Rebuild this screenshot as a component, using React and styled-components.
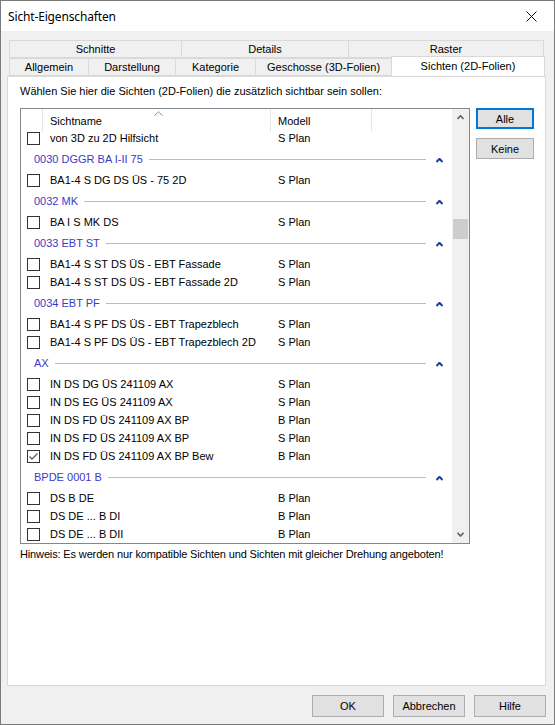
import React from "react";
import styled, { createGlobalStyle } from "styled-components";

const GlobalStyle = createGlobalStyle`
  html, body {
    margin: 0;
    padding: 0;
    background: #ffffff;
  }
  * {
    box-sizing: border-box;
  }
`;

const Window = styled.div`
  width: 555px;
  height: 725px;
  border: 1px solid #7a7a7a;
  background: #f0f0f0;
  display: flex;
  flex-direction: column;
  font-family: "Liberation Sans", Arial, sans-serif;
  font-size: 11px;
  color: #000;
`;

const TitleBar = styled.div`
  height: 30px;
  background: #fff;
  display: flex;
  align-items: center;
  justify-content: space-between;
  padding-left: 7px;
  font-family: "Noto Sans", "Open Sans", sans-serif;
  font-size: 12px;
  letter-spacing: -0.15px;
`;

const CloseBox = styled.div`
  width: 46px;
  height: 30px;
  display: flex;
  align-items: center;
  justify-content: center;
`;

const Content = styled.div`
  padding: 9px 8px 0 6px;
  display: flex;
  flex-direction: column;
`;

const TabStrip = styled.div`
  margin-left: 2px;
  display: flex;
  flex-direction: column;
`;

const TabRow = styled.div`
  display: flex;
  height: 18px;
`;

const Tab = styled.div`
  width: ${(p) => p.$w}px;
  height: ${(p) => (p.$active ? 20 : 18)}px;
  margin-top: ${(p) => (p.$active ? -2 : 0)}px;
  border: 1px solid #d9d9d9;
  border-right: ${(p) => (p.$last ? "1px solid #d9d9d9" : "none")};
  border-bottom: ${(p) => (p.$active ? "none" : "1px solid #d9d9d9")};
  background: ${(p) => (p.$active ? "#fff" : "#f0f0f0")};
  display: flex;
  align-items: center;
  justify-content: center;
  padding-bottom: ${(p) => (p.$active ? 2 : 0)}px;
  position: relative;
  z-index: ${(p) => (p.$active ? 2 : 1)};
  margin-bottom: ${(p) => (p.$active ? -1 : 0)}px;
  white-space: nowrap;
`;

const Panel = styled.div`
  height: 610px;
  border: 1px solid #d9d9d9;
  background: #fff;
  padding: 8px 0 0 12px;
  display: flex;
  flex-direction: column;
`;

const Label = styled.div`
  height: 13px;
  line-height: 13px;
  margin-bottom: 10px;
  white-space: nowrap;
`;

const ListArea = styled.div`
  display: flex;
  gap: 6px;
  align-items: flex-start;
`;

const ListBox = styled.div`
  width: 450px;
  height: 436px;
  border: 1px solid #828790;
  background: #fff;
  display: flex;
`;

const ListMain = styled.div`
  flex: 1;
  display: flex;
  flex-direction: column;
  overflow: hidden;
`;

const Header = styled.div`
  height: 23px;
  display: flex;
  flex-shrink: 0;
`;

const HeadCell = styled.div`
  width: ${(p) => (p.$w ? `${p.$w}px` : "auto")};
  flex: ${(p) => (p.$w ? "none" : 1)};
  border-right: ${(p) => (p.$w ? "1px solid #e5e5e5" : "none")};
  padding-left: 7px;
  padding-top: 1px;
  display: flex;
  align-items: center;
  position: relative;
`;

const SortMark = styled.svg`
  position: absolute;
  top: 2px;
  left: 50%;
  margin-left: -3px;
`;

const Body = styled.div`
  flex: 1;
  overflow: hidden;
`;

/* list is scrolled a few pixels into its first entry */
const Scroller = styled.div`
  margin-top: -3px;
`;

const Row = styled.div`
  height: 18px;
  display: flex;
  align-items: center;
`;

const CheckCell = styled.div`
  width: 22px;
  padding-left: 6px;
  display: flex;
  align-items: center;
`;

const Box = styled.div`
  width: 13px;
  height: 13px;
  border: 1px solid #333;
  background: #fff;
  display: flex;
  align-items: center;
  justify-content: center;
`;

const NameCell = styled.div`
  width: 228px;
  padding-left: 7px;
  white-space: nowrap;
`;

const ModelCell = styled.div`
  padding-left: 7px;
  white-space: nowrap;
`;

const Group = styled.div`
  height: 24px;
  display: flex;
  align-items: center;
  padding-left: 13px;
  color: #3a3ac8;
`;

const GroupRule = styled.div`
  flex: 1;
  height: 1px;
  margin-left: 6px;
  margin-top: 1px;
  background: #b0bcd8;
`;

const Collapse = styled.div`
  width: 26px;
  display: flex;
  justify-content: center;
  padding-top: 3px;
`;

const ScrollBar = styled.div`
  width: 17px;
  background: #f0f0f0;
  display: flex;
  flex-direction: column;
`;

const ArrowBox = styled.div`
  height: 17px;
  display: flex;
  align-items: center;
  justify-content: center;
`;

const Track = styled.div`
  flex: 1;
`;

const Thumb = styled.div`
  width: 15px;
  height: 20px;
  margin-left: 1px;
  background: #cdcdcd;
`;

const SideButtons = styled.div`
  display: flex;
  flex-direction: column;
  gap: 9px;
`;

const Button = styled.div`
  width: ${(p) => p.$w}px;
  height: ${(p) => p.$h}px;
  background: #e1e1e1;
  border: ${(p) => (p.$default ? "2px solid #0078d7" : "1px solid #adadad")};
  display: flex;
  align-items: center;
  justify-content: center;
`;

const Hint = styled.div`
  margin-top: 4px;
  height: 13px;
  line-height: 13px;
  white-space: nowrap;
  letter-spacing: -0.14px;
`;

const Footer = styled.div`
  display: flex;
  justify-content: flex-end;
  gap: 9px;
  padding-top: 9px;
`;

const Chevron = ({ color, w = 7, h = 4, sw = 1.6, down }) => (
  <svg width={w} height={h + 1} viewBox={`0 0 ${w} ${h + 1}`}>
    <polyline
      points={
        down
          ? `0.5,0.8 ${w / 2},${h} ${w - 0.5},0.8`
          : `0.5,${h} ${w / 2},0.8 ${w - 0.5},${h}`
      }
      fill="none"
      stroke={color}
      strokeWidth={sw}
    />
  </svg>
);

const Check = () => (
  <svg width="11" height="11" viewBox="0 0 11 11">
    <polyline points="1.5,5.5 4,8 9.5,2.5" fill="none" stroke="#606060" strokeWidth="1.4" />
  </svg>
);

const backTabs = [
  { label: "Schnitte", w: 172 },
  { label: "Details", w: 167 },
  { label: "Raster", w: 196 },
];

const frontTabs = [
  { label: "Allgemein", w: 79 },
  { label: "Darstellung", w: 87 },
  { label: "Kategorie", w: 80 },
  { label: "Geschosse (3D-Folien)", w: 136 },
  { label: "Sichten (2D-Folien)", w: 154, active: true },
];

const entries = [
  { name: "von 3D zu 2D Hilfsicht", model: "S Plan" },
  { group: "0030 DGGR BA I-II 75" },
  { name: "BA1-4 S DG DS ÜS - 75 2D", model: "S Plan" },
  { group: "0032 MK" },
  { name: "BA I S MK DS", model: "S Plan" },
  { group: "0033 EBT ST" },
  { name: "BA1-4 S ST DS ÜS - EBT Fassade", model: "S Plan" },
  { name: "BA1-4 S ST DS ÜS - EBT Fassade 2D", model: "S Plan" },
  { group: "0034 EBT PF" },
  { name: "BA1-4 S PF DS ÜS - EBT Trapezblech", model: "S Plan" },
  { name: "BA1-4 S PF DS ÜS - EBT Trapezblech 2D", model: "S Plan" },
  { group: "AX" },
  { name: "IN DS DG ÜS 241109 AX", model: "S Plan" },
  { name: "IN DS EG ÜS 241109 AX", model: "S Plan" },
  { name: "IN DS FD ÜS 241109 AX BP", model: "B Plan" },
  { name: "IN DS FD ÜS 241109 AX BP", model: "S Plan" },
  { name: "IN DS FD ÜS 241109 AX BP Bew", model: "B Plan", checked: true },
  { group: "BPDE 0001 B" },
  { name: "DS B DE", model: "B Plan" },
  { name: "DS DE ... B DI", model: "B Plan" },
  { name: "DS DE ... B DII", model: "B Plan" },
];

export default function App() {
  return (
    <>
      <GlobalStyle />
      <Window>
        <TitleBar>
          <span>Sicht-Eigenschaften</span>
          <CloseBox>
            <svg width="11" height="11" viewBox="0 0 11 11">
              <path d="M0.5 0.5 L10.5 10.5 M10.5 0.5 L0.5 10.5" stroke="#111" strokeWidth="1" />
            </svg>
          </CloseBox>
        </TitleBar>
        <Content>
          <TabStrip>
            <TabRow>
              {backTabs.map((t, i) => (
                <Tab key={t.label} $w={t.w} $last={i === backTabs.length - 1}>
                  {t.label}
                </Tab>
              ))}
            </TabRow>
            <TabRow>
              {frontTabs.map((t, i) => (
                <Tab
                  key={t.label}
                  $w={t.w}
                  $active={t.active}
                  $last={i === frontTabs.length - 1}
                >
                  {t.label}
                </Tab>
              ))}
            </TabRow>
          </TabStrip>
          <Panel>
            <Label>Wählen Sie hier die Sichten (2D-Folien) die zusätzlich sichtbar sein sollen:</Label>
            <ListArea>
              <ListBox>
                <ListMain>
                  <Header>
                    <HeadCell $w={22} />
                    <HeadCell $w={228}>
                      <SortMark width="9" height="5" viewBox="0 0 9 5">
                        <polyline points="0.5,4.5 4.5,0.8 8.5,4.5" fill="none" stroke="#8a8a8a" strokeWidth="1" />
                      </SortMark>
                      Sichtname
                    </HeadCell>
                    <HeadCell $w={101}>Modell</HeadCell>
                    <HeadCell />
                  </Header>
                  <Body>
                    <Scroller>
                      {entries.map((e, i) =>
                        e.group ? (
                          <Group key={i}>
                            <span>{e.group}</span>
                            <GroupRule />
                            <Collapse>
                              <Chevron color="#1c3f94" sw={2} />
                            </Collapse>
                          </Group>
                        ) : (
                          <Row key={i}>
                            <CheckCell>
                              <Box>{e.checked && <Check />}</Box>
                            </CheckCell>
                            <NameCell>{e.name}</NameCell>
                            <ModelCell>{e.model}</ModelCell>
                          </Row>
                        )
                      )}
                    </Scroller>
                  </Body>
                </ListMain>
                <ScrollBar>
                  <ArrowBox>
                    <Chevron color="#606060" />
                  </ArrowBox>
                  <Track>
                    <Thumb style={{ marginTop: 93 }} />
                  </Track>
                  <ArrowBox>
                    <Chevron color="#606060" down />
                  </ArrowBox>
                </ScrollBar>
              </ListBox>
              <SideButtons>
                <Button $w={58} $h={21} $default>Alle</Button>
                <Button $w={58} $h={21}>Keine</Button>
              </SideButtons>
            </ListArea>
            <Hint>Hinweis: Es werden nur kompatible Sichten und Sichten mit gleicher Drehung angeboten!</Hint>
          </Panel>
          <Footer>
            <Button $w={72} $h={22}>OK</Button>
            <Button $w={72} $h={22}>Abbrechen</Button>
            <Button $w={72} $h={22}>Hilfe</Button>
          </Footer>
        </Content>
      </Window>
    </>
  );
}
